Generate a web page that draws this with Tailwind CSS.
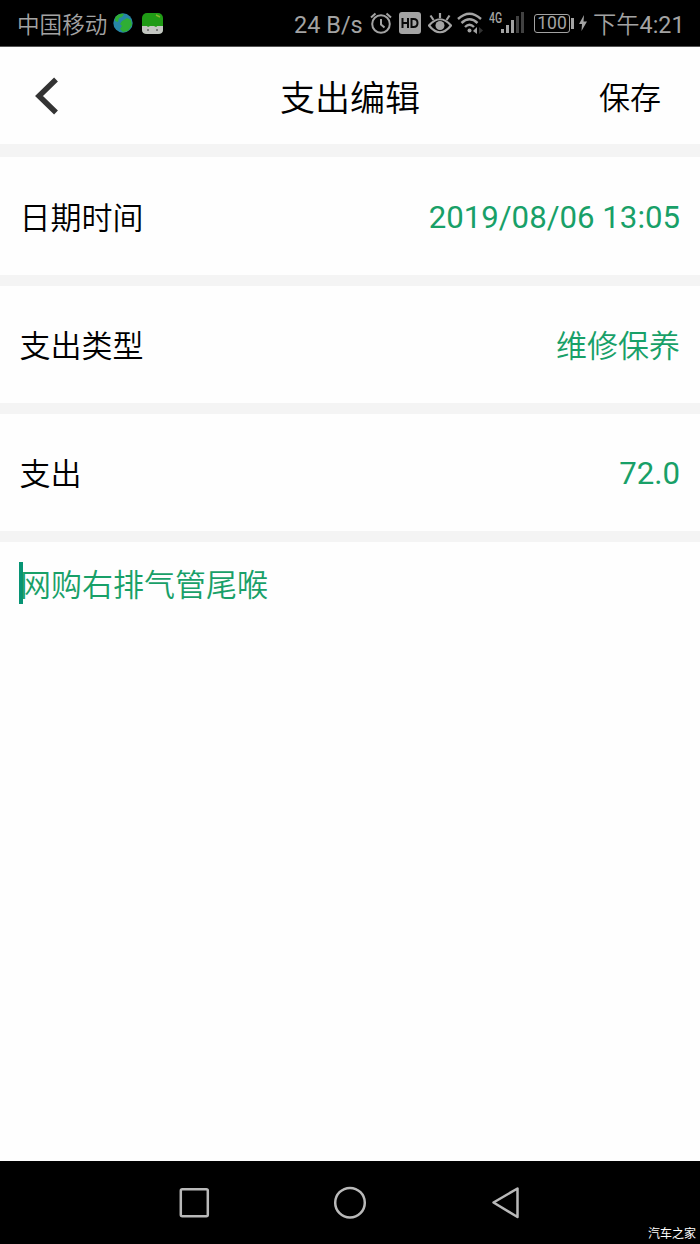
<!DOCTYPE html>
<html lang="zh-CN">
<head>
<meta charset="utf-8">
<title>支出编辑</title>
<script src="https://cdn.jsdelivr.net/npm/@tailwindcss/browser@4"></script>
</head>
<body class="bg-white">
<div class="flex h-[1244px] w-[700px] flex-col overflow-hidden bg-[#fefefe] font-['Roboto','Noto_Sans_CJK_SC',sans-serif] text-[31px] leading-none text-black">
  <!-- status bar -->
  <div class="flex h-[47px] shrink-0 items-center border-b border-[#555] bg-black pl-[17px] text-[23px] whitespace-nowrap text-[#a3a3a3]">
    <span class="w-[96px] pt-[7px] text-[22.6px] font-[350]">中国移动</span>
    <svg class="h-5 w-5 shrink-0" viewBox="0 0 20 20"><circle cx="10" cy="10" r="9.7" fill="#2686a6"/><path d="M2 5Q5 0 11 1L9 4 6 5 5 9 2 8ZM9 8l5-3 4 2 1 5-4 6-5 1-3-3 2-3-2-2Z" fill="#2fae35"/></svg>
    <svg class="ml-[8px] h-[23px] w-[23px] shrink-0" viewBox="0 0 23 23"><rect x="1" y="1" width="21" height="21" rx="5" fill="#209b16"/><path d="M1 14h21v4q0 4-5 4H6q-5 0-5-4Z" fill="#c4c6c2"/><path d="M1 14l3-2 3 3 4-2 4 2 4-3 3 2" fill="#209b16"/><circle cx="7" cy="18" r="1" fill="#666"/><circle cx="16" cy="18" r="1" fill="#666"/><path d="M15 3l4 2" stroke="#8ab82c" stroke-width="1.5"/></svg>
    <span class="ml-[130px] w-[75px] pt-[5px] text-[23.5px]">24 B/s</span>
    <svg class="h-6 w-6 shrink-0" viewBox="0 0 24 24" fill="none" stroke="#a3a3a3" stroke-width="2"><circle cx="12" cy="13" r="8.8"/><path d="M12 8v5.5l3.5 3M2 6.500 6.500 2.500M17.500 2.500 22 6.500"/></svg>
    <svg class="ml-[6px] h-6 w-[22px] shrink-0" viewBox="0 0 22 24"><rect y="1" width="22" height="22" rx="3" fill="#a3a3a3"/><path d="M3.500 7v10M9 7v10M3.500 12H9M12.500 8v8h2q4 0 4-4t-4-4Z" fill="none" stroke="#080808" stroke-width="2"/></svg>
    <svg class="mt-[2px] ml-[7px] h-6 w-6 shrink-0" viewBox="0 0 24 24" fill="none" stroke="#a3a3a3" stroke-width="2.200"><path d="M1 13.500Q12 1 23 13.500Q12 27 1 13.500ZM12 1v5M2.500 3.500l3 4.500M21.500 3.500l-3 4.500"/><circle cx="12" cy="13.500" r="4.500" fill="#a3a3a3" stroke="none"/></svg>
    <svg class="ml-[5px] h-6 w-[26px] shrink-0" viewBox="0 0 26 24" fill="none" stroke="#a3a3a3" stroke-width="2.4"><path d="M1 8Q12.500-2.500 24 8M4.500 12Q12.500 4.500 20.500 12M8 16Q12.500 11.500 17 16"/><circle cx="12.500" cy="19.500" r="2" fill="#a3a3a3" stroke="none"/><path d="M20 16v7l-4-3Z" fill="#a3a3a3" stroke="none"/><path d="M22 16v7l4-3.500Z" fill="#333" stroke="none"/></svg>
    <div class="ml-[6px] flex h-6 w-[37px] shrink-0 items-start">
      <span class="w-[12px] origin-left scale-x-75 text-[14px] font-medium">4G</span>
      <svg class="h-6 w-[23px] shrink-0" viewBox="0 0 23 24" fill="#a3a3a3"><rect x="0" y="18" width="3" height="4"/><rect x="5" y="14" width="3" height="8"/><rect x="10" y="9" width="3" height="13"/><g fill="#414141"><rect x="15" y="5" width="3" height="17"/><rect x="20" y="1" width="3" height="21"/></g></svg>
    </div>
    <div class="ml-[8px] flex h-[19px] w-[36px] shrink-0 items-center justify-center rounded-[3px] border border-[#a3a3a3] pt-px text-[17.500px]">100</div>
    <div class="ml-px h-[11px] w-[3px] bg-[#a3a3a3]"></div>
    <svg class="ml-[5px] h-4 w-[8px] shrink-0" viewBox="0 0 8 16"><path d="M5 0 0 9h3L2.500 16 8 6.500H4.500Z" fill="#a3a3a3"/></svg>
    <span class="ml-[6px] pt-[6px] text-[23.300px] font-[350]">下午<span class="font-normal">4:21</span></span>
  </div>
  <!-- title bar -->
  <div class="grid h-[97px] shrink-0 grid-cols-3 items-center pr-[39px] pl-[35px]">
    <svg class="h-[38px] w-6" viewBox="0 0 24 38"><path d="M21 2.500 4 19l17 16.500" fill="none" stroke="#333" stroke-width="5.500"/></svg>
    <h1 class="ml-[4px] pt-[7px] text-center text-[35px] font-[350] whitespace-nowrap">支出编辑</h1>
    <button class="pt-[5px] text-right font-[350]">保存</button>
  </div>
  <div class="h-[13px] shrink-0 bg-[#f4f4f4]"></div>
  <div class="flex h-[118px] shrink-0 items-center justify-between pt-[3px] pr-5 pl-[19.500px]"><span class="pt-[2px] font-[350]">日期时间</span><span class="text-[31.200px] text-[#18a068]">2019/08/06 13:05</span></div>
  <div class="h-[11px] shrink-0 bg-[#f4f4f4]"></div>
  <div class="flex h-[117px] shrink-0 items-center justify-between pt-[4px] pr-5 pl-[19.500px] font-[350]"><span>支出类型</span><span class="text-[#18a068]">维修保养</span></div>
  <div class="h-[11px] shrink-0 bg-[#f4f4f4]"></div>
  <div class="flex h-[117px] shrink-0 items-center justify-between pt-[3px] pr-5 pl-[19.500px]"><span class="font-[350]">支出</span><span class="text-[31.200px] text-[#18a068]">72.0</span></div>
  <div class="h-[11px] shrink-0 bg-[#f4f4f4]"></div>
  <!-- note field -->
  <div class="flex grow items-start pt-5 pl-[19px] font-[350] text-[#18a068]"><span class="h-[42px] w-1 bg-[#079474]"></span><span class="-ml-[3px] flex h-[46px] items-center">网购右排气管尾喉</span></div>
  <!-- navigation bar -->
  <div class="flex h-[83px] shrink-0 bg-black">
    <svg class="mt-[26px] ml-[179px] h-8 w-8" viewBox="0 0 32 32"><rect x="1.800" y="2.300" width="27" height="27" rx="1.500" fill="none" stroke="#b9b9b9" stroke-width="2.500"/></svg>
    <svg class="mt-[25px] ml-[122px] h-[34px] w-[34px]" viewBox="0 0 34 34"><circle cx="17" cy="16.700" r="14.800" fill="none" stroke="#b9b9b9" stroke-width="2.500"/></svg>
    <svg class="mt-[24px] ml-[123px] h-[36px] w-[30px]" viewBox="0 0 30 36"><path d="M27 4v28.500L3 18Z" transform="translate(.5 -.5)" fill="none" stroke="#b9b9b9" stroke-width="2.500" stroke-linejoin="round"/></svg>
    <span class="mt-[67px] ml-auto pr-[4px] text-[12px] text-white">汽车之家</span>
  </div>
</div>
</body>
</html>
